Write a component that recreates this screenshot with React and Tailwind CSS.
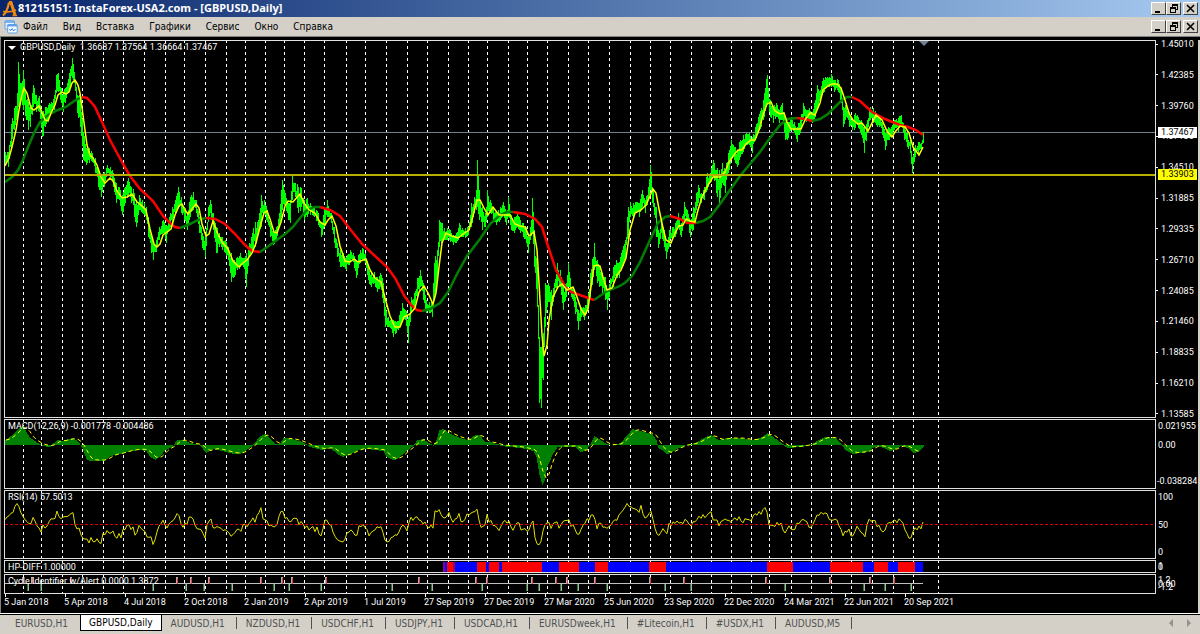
import { useState } from 'react';

const MENU = ['Файл', 'Вид', 'Вставка', 'Графики', 'Сервис', 'Окно', 'Справка'];

const TABS = [
  'EURUSD,H1',
  'GBPUSD,Daily',
  'AUDUSD,H1',
  'NZDUSD,H1',
  'USDCHF,H1',
  'USDJPY,H1',
  'USDCAD,H1',
  'EURUSDweek,H1',
  '#Litecoin,H1',
  '#USDX,H1',
  'AUDUSD,M5',
];

const DATES = [
  '5 Jan 2018', '5 Apr 2018', '4 Jul 2018', '2 Oct 2018', '2 Jan 2019', '2 Apr 2019', '1 Jul 2019', '27 Sep 2019',
  '27 Dec 2019', '27 Mar 2020', '25 Jun 2020', '23 Sep 2020', '22 Dec 2020', '24 Mar 2021', '22 Jun 2021', '20 Sep 2021',
];

const PRICES = [
  '1.45010', '1.42385', '1.39760', '1.37135', '1.34510', '1.31885', '1.29335',
  '1.26710', '1.24085', '1.21460', '1.18835', '1.16210', '1.13585',
];

// month separators
const GRID = [
  23, 41, 62, 82, 103, 123, 144, 165, 184, 205, 226, 245, 265, 284, 304, 324, 346, 365, 386, 407, 427, 448, 468, 487,
  508, 527, 547, 568, 588, 609, 630, 650, 670, 691, 711, 731, 751, 769, 791, 811, 831, 851, 872, 893, 913, 938,
];

// x, high, low
const RANGE = [
  [5, 152, 165], [8, 152, 167], [11, 124, 148], [14, 108, 130], [17, 93, 120], [18, 62, 107], [20, 83, 102],
  [23, 70, 110], [26, 100, 120], [28, 102, 130], [30, 107, 127], [33, 85, 107], [36, 95, 112], [39, 96, 112],
  [42, 113, 137], [45, 107, 127], [48, 105, 120], [51, 102, 112], [54, 95, 110], [56, 75, 93], [58, 73, 92],
  [60, 87, 100], [63, 92, 112], [66, 87, 98], [69, 73, 90], [72, 58, 78], [74, 72, 83], [77, 95, 113],
  [80, 97, 127], [83, 132, 160], [86, 148, 165], [89, 148, 163], [92, 153, 162], [95, 158, 173], [98, 170, 187],
  [101, 177, 197], [104, 172, 187], [107, 165, 173], [110, 167, 177], [113, 173, 187], [116, 183, 203],
  [119, 187, 200], [122, 195, 215], [125, 187, 203], [128, 178, 195], [131, 187, 203], [134, 193, 217],
  [136, 200, 227], [139, 195, 210], [142, 200, 213], [146, 207, 220], [148, 217, 237], [151, 233, 253],
  [153, 243, 260], [156, 240, 252], [159, 227, 240], [163, 220, 233], [166, 225, 243], [169, 217, 230],
  [172, 207, 223], [175, 200, 213], [178, 187, 207], [181, 197, 213], [184, 207, 220], [187, 213, 230],
  [190, 197, 217], [193, 192, 210], [196, 200, 213], [199, 217, 233], [202, 233, 248], [205, 237, 257],
  [208, 207, 222], [210, 200, 213], [213, 213, 230], [216, 227, 253], [219, 233, 247], [222, 237, 250],
  [225, 240, 253], [228, 247, 260], [231, 253, 282], [234, 260, 277], [237, 257, 270], [240, 253, 267],
  [243, 258, 267], [246, 253, 287], [249, 243, 257], [252, 233, 253], [255, 222, 247], [258, 220, 233],
  [261, 195, 227], [264, 200, 213], [267, 210, 222], [270, 223, 237], [273, 232, 245], [276, 227, 240],
  [279, 213, 227], [282, 180, 210], [285, 193, 205], [288, 203, 220], [290, 200, 223], [292, 175, 200],
  [295, 183, 197], [298, 187, 213], [301, 188, 207], [304, 200, 220], [307, 198, 217], [310, 203, 215],
  [314, 208, 217], [318, 213, 225], [321, 223, 237], [324, 210, 227], [327, 200, 217], [331, 213, 223],
  [334, 227, 243], [337, 243, 257], [340, 250, 267], [343, 253, 267], [346, 257, 270], [350, 250, 262],
  [353, 253, 262], [356, 260, 278], [360, 250, 263], [362, 248, 260], [365, 253, 263], [368, 265, 280],
  [371, 273, 287], [374, 272, 283], [377, 277, 292], [380, 273, 287], [383, 283, 303], [385, 307, 327],
  [388, 317, 327], [390, 320, 328], [393, 320, 337], [396, 322, 333], [399, 315, 328], [402, 303, 320],
  [405, 310, 320], [408, 317, 343], [411, 297, 313], [414, 293, 307], [417, 278, 300], [420, 270, 287],
  [423, 283, 300], [426, 300, 313], [429, 302, 313], [432, 303, 317], [434, 263, 300], [437, 250, 280],
  [439, 220, 247], [441, 223, 243], [444, 228, 240], [447, 228, 240], [450, 230, 242], [453, 235, 245],
  [456, 233, 243], [459, 223, 238], [462, 228, 237], [465, 228, 238], [468, 227, 235], [471, 203, 227],
  [474, 197, 213], [476, 190, 210], [477, 160, 207], [479, 190, 220], [482, 207, 230], [485, 213, 227],
  [487, 190, 217], [490, 200, 213], [493, 208, 220], [496, 212, 225], [500, 207, 220], [503, 202, 215],
  [506, 213, 225], [508, 197, 217], [511, 215, 230], [514, 217, 233], [517, 213, 227], [520, 220, 233],
  [523, 223, 237], [526, 227, 243], [528, 237, 253], [530, 227, 240], [532, 198, 233], [534, 230, 267],
  [537, 267, 307], [539, 337, 403], [541, 347, 408], [543, 333, 380], [545, 283, 327], [548, 283, 302],
  [551, 290, 320], [554, 283, 297], [557, 263, 287], [560, 270, 287], [563, 287, 310], [566, 283, 297],
  [568, 263, 287], [571, 287, 297], [574, 290, 307], [578, 310, 330], [581, 307, 317], [584, 308, 320],
  [587, 297, 310], [590, 273, 300], [594, 243, 270], [597, 260, 283], [602, 273, 293], [605, 277, 300],
  [607, 290, 310], [610, 278, 290], [613, 267, 287], [616, 260, 277], [619, 262, 278], [622, 250, 267],
  [625, 240, 260], [628, 207, 240], [630, 202, 217], [633, 203, 217], [636, 202, 213], [639, 203, 217],
  [642, 190, 207], [645, 200, 213], [648, 187, 200], [650, 165, 190], [653, 190, 207], [656, 207, 237],
  [658, 230, 248], [661, 223, 233], [664, 230, 247], [666, 243, 259], [669, 230, 247], [672, 227, 240],
  [675, 223, 237], [678, 213, 227], [681, 223, 237], [684, 202, 220], [687, 210, 223], [690, 220, 237],
  [693, 207, 230], [696, 193, 210], [698, 185, 203], [701, 193, 203], [704, 187, 200], [707, 173, 190],
  [710, 173, 183], [713, 160, 177], [716, 170, 193], [719, 170, 203], [722, 163, 183], [725, 170, 193],
  [728, 153, 173], [731, 140, 160], [734, 147, 160], [737, 150, 167], [740, 140, 157], [743, 135, 152],
  [746, 133, 145], [749, 133, 145], [752, 137, 153], [755, 127, 140], [758, 117, 133], [761, 108, 127],
  [764, 93, 117], [767, 75, 103], [770, 100, 117], [773, 107, 123], [776, 103, 117], [779, 110, 123],
  [782, 103, 120], [785, 120, 140], [788, 122, 138], [791, 117, 130], [794, 122, 133], [797, 127, 142],
  [800, 117, 133], [803, 103, 120], [806, 110, 122], [809, 108, 120], [812, 112, 123], [815, 100, 117],
  [817, 85, 110], [820, 90, 100], [823, 78, 93], [826, 78, 88], [829, 77, 87], [831, 74, 87], [834, 80, 92],
  [838, 80, 92], [841, 88, 103], [843, 107, 127], [846, 103, 117], [849, 112, 127], [852, 120, 130],
  [855, 113, 128], [858, 117, 128], [861, 120, 135], [864, 127, 153], [867, 120, 133], [870, 107, 120],
  [873, 108, 123], [876, 113, 125], [879, 115, 127], [882, 123, 135], [885, 133, 150], [888, 127, 140],
  [891, 127, 137], [894, 120, 130], [898, 118, 132], [901, 115, 127], [904, 127, 140], [907, 133, 147],
  [910, 140, 153], [912, 157, 173], [915, 145, 157], [918, 142, 153], [921, 143, 150], [923, 132, 143],
];

const FAST_MA =
  '5,166 9,158 12,147 16,130 19,110 22,95 24,88 27,93 31,108 34,110 39,106 42,112 45,120 48,121 51,113 55,105 58,95 62,92 66,94 69,92 72,83 75,80 78,85 80,93 83,115 87,145 90,155 93,158 97,165 101,177 105,183 110,178 113,181 117,191 122,198 127,197 132,194 137,202 142,206 146,210 150,229 154,244 157,247 160,244 163,235 167,232 171,229 175,215 179,206 182,204 185,210 188,214 192,209 196,204 199,208 202,224 206,236 209,234 213,221 217,232 222,242 228,249 233,261 239,267 243,263 247,260 252,253 256,243 260,227 264,213 267,211 270,219 274,232 277,233 281,222 285,206 288,201 293,202 300,194 304,203 309,210 315,213 320,222 325,225 328,220 332,216 336,226 340,246 345,261 350,262 354,259 358,262 366,259 370,270 375,278 381,282 385,298 390,316 395,327 400,327 404,317 410,314 415,308 419,292 424,286 428,293 433,304 436,293 439,267 442,243 446,233 452,236 458,238 463,234 469,230 473,216 477,200 480,200 484,208 488,215 493,207 499,215 510,215 515,224 520,226 525,227 529,236 534,232 537,250 539,283 542,335 544,356 547,345 549,320 553,297 558,287 562,284 567,290 573,287 577,297 581,309 585,315 588,309 591,287 594,266 597,265 600,266 603,277 607,290 612,288 617,275 621,270 626,258 630,230 635,213 641,210 646,205 650,196 653,189 656,193 659,209 663,228 666,240 671,243 675,233 679,226 683,225 686,219 690,221 695,222 698,210 702,197 708,185 713,177 720,177 725,172 729,162 734,155 738,150 742,150 746,144 751,140 755,140 759,130 763,115 767,104 771,102 775,111 780,114 784,113 787,122 791,129 801,129 805,120 810,113 815,115 820,103 823,90 828,86 832,84 837,84 841,88 845,100 849,113 853,120 858,124 862,123 868,131 872,123 876,115 882,120 887,131 892,137 895,132 900,126 905,127 909,133 913,147 919,155 923,147';

const SLOW_UP = [
  '5,182 12,177 18,170 23,160 28,147 34,133 40,122 48,115 58,110 66,107 74,101 82,97',
  '180,228 190,224 198,220 206,218',
  '260,252 270,245 285,234 293,227 300,218 306,211 314,207 320,207',
  '422,311 430,309 440,303 448,292 457,274 467,256 480,239 490,224 500,215 507,212 513,212',
  '594,300 607,291 620,286 626,282 632,276 640,262 650,240 658,223 665,217 670,216',
  '696,223 703,221 710,217 720,204 740,176 760,152 770,138 780,125 788,119 797,118',
  '812,121 820,119 828,114 835,107 842,100 847,97 852,97',
];

const SLOW_DOWN = [
  '82,97 87,98 91,102 95,107 102,122 110,140 123,164 130,176 140,189 153,201 163,216 170,223 175,227 180,228',
  '206,218 215,219 225,224 235,234 245,245 252,251 260,252',
  '320,207 330,210 340,216 350,229 362,244 375,256 387,267 395,278 405,297 412,306 417,310 422,311',
  '513,212 525,214 535,219 542,227 548,246 556,270 566,288 571,292 577,294 594,300',
  '670,216 680,219 687,223 696,223',
  '797,118 805,119 812,121',
  '852,97 860,101 872,112 885,119 900,125 908,127 916,130 923,135',
];

const MACD = [
  [5, 440], [12, 435], [20, 427], [23, 426], [27, 434], [30, 438], [36, 442], [42, 445], [50, 446], [57, 440],
  [62, 441], [68, 439], [73, 438], [78, 442], [82, 447], [86, 458], [90, 460], [104, 460], [110, 455], [120, 453],
  [130, 450], [140, 449], [146, 450], [150, 456], [155, 459], [160, 455], [165, 449], [172, 446], [177, 440],
  [183, 440], [190, 443], [200, 445], [206, 452], [213, 448], [222, 450], [233, 453], [240, 453], [246, 449],
  [252, 445], [260, 436], [265, 434], [270, 439], [275, 444], [279, 444], [283, 438], [292, 439], [302, 442],
  [310, 446], [322, 449], [330, 447], [337, 453], [342, 456], [350, 453], [358, 449], [366, 448], [383, 450],
  [386, 456], [393, 459], [397, 458], [406, 450], [413, 445], [417, 440], [423, 439], [428, 443], [433, 445],
  [436, 440], [439, 430], [443, 429], [450, 434], [460, 438], [468, 440], [475, 435], [479, 435], [485, 442],
  [490, 442], [500, 445], [520, 447], [533, 450], [536, 456], [539, 474], [542, 484], [544, 480], [547, 465],
  [553, 452], [557, 446], [575, 446], [580, 451], [585, 450], [590, 444], [594, 436], [600, 440], [606, 444],
  [613, 445], [620, 443], [627, 435], [632, 429], [640, 431], [652, 434], [656, 440], [658, 447], [663, 450],
  [666, 453], [671, 452], [676, 448], [684, 445], [695, 443], [705, 437], [711, 435], [718, 440], [727, 438],
  [740, 438], [752, 440], [762, 437], [767, 433], [773, 437], [778, 441], [784, 445], [787, 447], [800, 446],
  [812, 444], [818, 440], [825, 437], [835, 438], [842, 445], [845, 449], [852, 453], [860, 452], [868, 451],
  [872, 447], [876, 445], [884, 447], [890, 450], [896, 448], [900, 445], [908, 447], [913, 452], [918, 451],
  [923, 446],
];

const RSI = [
  [5, 520], [8, 519], [10, 512], [14, 508], [17, 504], [20, 510], [22, 515], [24, 519], [27, 525], [30, 524],
  [33, 518], [37, 523], [41, 529], [44, 526], [48, 526], [52, 520], [57, 513], [60, 522], [64, 520], [68, 518],
  [72, 512], [75, 524], [80, 533], [83, 540], [90, 540], [95, 540], [100, 543], [104, 533], [108, 529],
  [112, 533], [116, 538], [119, 530], [121, 536], [125, 528], [130, 526], [135, 533], [140, 526], [144, 528],
  [148, 536], [153, 543], [156, 534], [160, 525], [163, 520], [166, 528], [170, 521], [175, 517], [178, 513],
  [181, 524], [185, 526], [190, 518], [194, 523], [198, 528], [205, 537], [207, 522], [211, 521], [215, 530],
  [220, 528], [226, 530], [232, 537], [236, 530], [241, 530], [246, 524], [252, 522], [256, 518], [261, 511],
  [265, 520], [269, 525], [274, 529], [278, 520], [282, 512], [286, 517], [290, 524], [293, 517], [297, 522],
  [300, 522], [306, 527], [312, 527], [318, 530], [322, 534], [326, 517], [330, 524], [336, 535], [341, 540],
  [345, 539], [350, 529], [356, 537], [360, 523], [365, 530], [370, 535], [375, 527], [380, 528], [385, 538],
  [392, 540], [397, 535], [402, 523], [407, 529], [410, 520], [417, 515], [420, 521], [427, 524], [433, 530],
  [435, 514], [439, 508], [443, 515], [448, 514], [453, 521], [459, 516], [464, 522], [471, 511], [477, 508],
  [479, 520], [482, 528], [485, 523], [487, 516], [492, 524], [498, 528], [503, 524], [508, 520], [512, 528],
  [518, 525], [524, 530], [528, 530], [532, 518], [534, 530], [537, 543], [539, 548], [542, 540], [545, 523],
  [551, 525], [556, 521], [560, 527], [568, 520], [573, 526], [578, 534], [583, 528], [588, 518], [594, 512],
  [597, 526], [602, 523], [607, 530], [612, 520], [617, 520], [622, 515], [628, 504], [633, 505], [636, 514],
  [641, 508], [644, 518], [650, 512], [653, 520], [657, 534], [662, 530], [666, 534], [670, 523], [676, 521],
  [680, 524], [685, 519], [690, 527], [695, 520], [703, 516], [708, 513], [712, 515], [718, 525], [724, 517],
  [730, 522], [738, 520], [744, 520], [750, 520], [758, 514], [766, 508], [769, 522], [775, 526], [780, 524],
  [785, 533], [790, 525], [795, 528], [800, 522], [803, 519], [808, 524], [813, 525], [816, 514], [822, 515],
  [828, 517], [833, 520], [838, 524], [843, 537], [847, 529], [852, 536], [858, 527], [864, 536], [870, 520],
  [876, 524], [884, 534], [888, 524], [895, 521], [902, 523], [906, 533], [911, 537], [914, 528], [920, 528],
  [923, 521],
];

// start x and colour, each block runs to the next one
const HP_DIFF = [
  [443, '#8000a0'], [445, '#0000ff'], [447, '#ff0000'], [453, '#a00060'], [455, '#0000ff'], [477, '#ff0000'],
  [486, '#0000ff'], [489, '#ff0000'], [499, '#0000ff'], [502, '#ff0000'], [542, '#0000ff'], [559, '#ff0000'],
  [579, '#0000ff'], [595, '#ff0000'], [608, '#0000ff'], [649, '#ff0000'], [666, '#0000ff'], [767, '#ff0000'],
  [793, '#0000ff'], [830, '#ff0000'], [863, '#0000ff'], [874, '#ff0000'], [888, '#0000ff'], [898, '#ff0000'],
  [915, '#0000ff'], [923, '#0000ff'],
];

const CYCLE_TOPS = [
  23, 32, 71, 177, 191, 209, 261, 282, 292, 326, 419, 476, 487, 532, 556, 567, 595, 650, 684, 766, 830, 870, 894,
];
const CYCLE_BOTTOMS = [
  28, 41, 153, 186, 204, 232, 274, 289, 321, 392, 432, 482, 527, 539, 561, 578, 607, 665, 691, 785, 864, 885, 911,
];

// small repeatable noise in 0..1
const noise = (n) => {
  const v = Math.sin(n * 12.9898) * 43758.5453;
  return v - Math.floor(v);
};

// value of column `col` at x, linear between the neighbouring points
const valueAt = (points, x, col = 1) => {
  const next = points.findIndex((p) => p[0] >= x);
  if (next <= 0) return points[0][col];
  const a = points[next - 1];
  const b = points[next];
  return a[col] + ((b[col] - a[col]) * (x - a[0])) / (b[0] - a[0]);
};

const xs = Array.from({ length: 919 }, (_, i) => i + 5);

const priceBars = xs.map((x) => {
  const key = RANGE.find((p) => p[0] === x);
  const high = valueAt(RANGE, x, 1);
  const low = valueAt(RANGE, x, 2);
  if (key) return `M${x + 0.5} ${high}V${low}`;
  const size = low - high;
  return `M${x + 0.5} ${high + (noise(x) - 0.2) * size * 0.45}V${low - (noise(x + 500) - 0.2) * size * 0.45}`;
});

const macdBars = xs.map((x) => `M${x + 0.5} 445V${Math.round(valueAt(MACD, x)) + (valueAt(MACD, x) >= 445 ? 1 : 0)}`);

const macdSignal = xs
  .filter((x) => x % 3 === 0)
  .map((x) => {
    const values = [1, 3, 5, 7].map((d) => valueAt(MACD, Math.max(5, x - d)));
    return `${x},${values.reduce((sum, v) => sum + v, 0) / values.length}`;
  });

const rsiLine = xs.filter((x) => x % 2 === 1).map((x) => `${x},${valueAt(RSI, x) + (noise(x) - 0.5) * 7}`);

function AppLogo() {
  return (
    <svg className="h-4 w-4" viewBox="0 0 16 16" fill="none" stroke="#f08a10">
      <path d="M1 14.5C4 12 6 7 7 1.5" strokeWidth="2.2" />
      <path d="M7 1.5h2L13 14" strokeWidth="3" />
      <path d="M1 10.5c4 1 8 .5 13-1.5" strokeWidth="1.6" />
      <path d="M10.5 14.5H15" strokeWidth="1.5" />
    </svg>
  );
}

function ChartIcon() {
  return (
    <svg className="h-[14px] w-[14px]" viewBox="0 0 14 14" fill="none">
      <rect x="1" y=".7" width="9.5" height="8.5" rx="1" fill="#eaf4ff" stroke="#5c9ee8" />
      <path d="M1 2h9.5" stroke="#5c9ee8" strokeWidth="1.5" />
      <path d="M2.5 6 4 4.5 5.500 6" stroke="#5c9ee8" />
      <rect x="3.7" y="4.5" width="9.5" height="8.5" rx="1" fill="#f4faff" stroke="#5c9ee8" />
      <path d="M4 5.7h9" stroke="#5c9ee8" strokeWidth="1.5" />
      <path d="m5.5 9 1 1.8 1.700-2.300 1.500 2.500L11.500 9" stroke="#3d83d6" />
    </svg>
  );
}

function WindowButton({ label, children }) {
  return (
    <button
      aria-label={label}
      className="flex h-[13px] w-[15px] items-center justify-center border border-t-white border-l-white border-r-[#404040] border-b-[#404040] bg-[#d4d0c8]"
    >
      <svg className="h-[9px] w-[9px]" viewBox="0 0 9 9" fill="none" stroke="#000" shapeRendering="crispEdges">
        {children}
      </svg>
    </button>
  );
}

function WindowButtons({ name }) {
  return (
    <div className="ml-auto flex pr-[2px]">
      <WindowButton label={`Minimize ${name}`}>
        <path d="M1 8h5" strokeWidth="2" />
      </WindowButton>
      <WindowButton label={`Restore ${name}`}>
        <path d="M3 1h6M1 4h6" strokeWidth="2" />
        <path d="M3.5 1v2M8.5 1v5M6 5.5h3M1.5 4v4.5M6.5 4v4.5M1 8.5h6" />
      </WindowButton>
      <div className="w-[2px]" />
      <WindowButton label={`Close ${name}`}>
        <path d="m1 1 7 7M8 1 1 8" strokeWidth="1.6" shapeRendering="auto" />
      </WindowButton>
    </div>
  );
}

// one chart window: plot on the left, its scale on the right
function Pane({ className, top, label, axis, children }) {
  return (
    <section className={`flex ${className}`}>
      <div className="relative min-w-0 flex-1 overflow-hidden border border-[#e0e0e0]">
        <svg className="absolute inset-0 h-full w-full" fill="none">
          <g transform={`translate(-5 ${-top - 1})`}>
            <path
              d={GRID.map((x) => `M${x + 0.5} ${top}V634`).join('')}
              stroke="#ffffff"
              strokeDasharray="3 3"
              shapeRendering="crispEdges"
            />
            {children}
          </g>
        </svg>
        <p className="relative mt-px ml-[3px] leading-[11px] whitespace-pre">{label}</p>
      </div>
      <div className="relative w-[42px] shrink-0">{axis}</div>
    </section>
  );
}

export default function App() {
  const [activeTab, setActiveTab] = useState('GBPUSD,Daily');

  return (
    <div className="flex min-h-screen flex-col bg-[#d4d0c8] font-['DejaVu_Sans_Condensed','DejaVu_Sans',sans-serif] text-[10px] text-black">
      <header className="flex h-[17px] items-center bg-linear-to-r from-[#0a246a] to-[#a6caf0] pl-[2px]">
        <AppLogo />
        <h1 className="font-['Noto_Sans',sans-serif] text-[11px] font-bold whitespace-nowrap text-white">
          81215151: InstaForex-USA2.com - [GBPUSD,Daily]
        </h1>
        <WindowButtons name="application" />
      </header>

      <nav className="flex h-[19px] items-center pl-1">
        <ChartIcon />
        <div className="ml-[5px] flex gap-[15px]">
          {MENU.map((item) => (
            <button key={item}>{item}</button>
          ))}
        </div>
        <WindowButtons name="chart" />
      </nav>

      <main className="flex flex-1 flex-col border-t border-l border-[#808080] bg-black pt-[3px] pl-[3px] font-['Roboto',sans-serif] text-[9px] text-white">
        <div className="flex flex-1 flex-col gap-px border-r-2 border-[#d4d0c8]">
          <Pane
            className="min-h-[300px] flex-1"
            top={40}
            label={
              <>
                <span className="mr-1 inline-block border-x-4 border-t-4 border-x-transparent border-t-white align-middle" />
                GBPUSD,Daily{'  '}1.36687 1.37564 1.36664 1.37467
              </>
            }
            axis={
              <>
                <div className="absolute inset-x-0 -inset-y-px flex flex-col justify-between leading-[10px]">
                  {PRICES.map((price) => (
                    <div key={price} className="flex items-center gap-[3px]">
                      <span className="h-px w-[2px] bg-white" />
                      {price}
                    </div>
                  ))}
                </div>
                <span className="absolute top-[87px] left-[2px] bg-white px-[3px] leading-[11px] text-black">1.37467</span>
                <span className="absolute top-[129px] left-[2px] bg-[#ffff00] px-[3px] leading-[11px] text-black">1.33903</span>
              </>
            }
          >
            <path d="M5 132.5H2000" stroke="#708090" shapeRendering="crispEdges" />
            <path d="M919 41h10l-5 5z" fill="#708090" />
            <path d={priceBars.join('')} stroke="#00ff00" shapeRendering="crispEdges" />
            {SLOW_UP.map((points) => (
              <polyline key={points} points={points} stroke="#008000" strokeWidth="2.5" />
            ))}
            {SLOW_DOWN.map((points) => (
              <polyline key={points} points={points} stroke="#ff0000" strokeWidth="2.5" />
            ))}
            <polyline points={FAST_MA} stroke="#ffff00" strokeWidth="1.5" />
            <path d="M5 175H2000" stroke="#b8b000" strokeWidth="2" shapeRendering="crispEdges" />
          </Pane>

          <Pane
            className="h-[70px]"
            top={419}
            label="MACD(12,26,9) -0.001778 -0.004486"
            axis={
              <div className="pl-[2px] leading-[10px] whitespace-nowrap">
                <div className="pt-[2px]">0.021955</div>
                <div className="pt-[9px]">0.00</div>
                <div className="-ml-px pt-[26px]">-0.038284</div>
              </div>
            }
          >
            <path d={macdBars.join('')} stroke="#008000" shapeRendering="crispEdges" />
            <polyline points={macdSignal.join(' ')} stroke="#ffff00" strokeDasharray="4 3" />
          </Pane>

          <Pane
            className="h-[69px]"
            top={490}
            label="RSI(14) 57.5013"
            axis={
              <div className="flex h-full flex-col justify-between py-[2px] pl-[2px] leading-[10px]">
                <div>100</div>
                <div>50</div>
                <div>0</div>
              </div>
            }
          >
            <polyline points={rsiLine.join(' ')} stroke="#e0e000" />
            <path d="M5 524.5H2000" stroke="#e00000" strokeDasharray="3 2" shapeRendering="crispEdges" />
          </Pane>

          <Pane
            className="h-[13px]"
            top={560}
            label="HP-DIFF 1.00000"
            axis={
              <>
                <span className="absolute top-[2px] left-[2px] leading-[10px]">0</span>
                <span className="absolute top-px left-[2px] leading-[10px]">1</span>
              </>
            }
          >
            {HP_DIFF.slice(0, -1).map(([x, color], i) => (
              <rect key={x} x={x} y="562" width={HP_DIFF[i + 1][0] - x} height="10" fill={color} />
            ))}
          </Pane>

          <Pane
            className="h-5"
            top={574}
            label="Cycle Identifier w/Alert 0.0000 1.3872"
            axis={
              <>
                <span className="absolute top-px left-[2px] leading-[10px]">1.2</span>
                <span className="absolute top-[5px] left-[2px] leading-[10px]">0.00</span>
                <span className="absolute top-[8px] left-[2px] leading-[10px]">-1.2</span>
              </>
            }
          >
            <g shapeRendering="crispEdges">
              <path d="M5 583.5H923" stroke="#c0c0c0" />
              <path d={CYCLE_TOPS.map((x) => `M${x - 0.5} 583.5V577.5H${x + 1}`).join('')} stroke="#b0b0b0" />
              <path d={CYCLE_TOPS.map((x) => `M${x + 0.5} 578V584`).join('')} stroke="#e04040" />
              <path d={CYCLE_BOTTOMS.map((x) => `M${x - 0.5} 584V590.5H${x + 1}`).join('')} stroke="#208030" />
              <path d={CYCLE_BOTTOMS.map((x) => `M${x + 0.5} 584V591`).join('')} stroke="#b0b0b0" />
            </g>
          </Pane>

          <div className="-mt-px flex h-[19px] leading-[11px] whitespace-nowrap">
            {DATES.map((date) => (
              <div key={date} className="w-[60px] shrink-0">
                <div className="ml-px h-[3px] w-px bg-white" />
                {date}
              </div>
            ))}
          </div>
        </div>
      </main>

      <footer className="flex h-[21px] items-start border-t border-white">
        <div className="flex flex-1 items-stretch border-t border-black pl-[6px] text-[#505050]">
          {TABS.map((tab, i) => {
            const active = tab === activeTab;
            const beforeActive = TABS[i + 1] === activeTab;
            return (
              <button
                key={tab}
                onClick={() => setActiveTab(tab)}
                className={
                  active
                    ? 'h-4 border-x border-b border-black bg-white px-2 leading-[15px] text-black'
                    : 'flex h-4 items-center pl-[9px] leading-[15px]'
                }
              >
                {tab}
                {!active && <span className={beforeActive ? 'ml-3' : 'ml-[11px] h-3 w-px bg-[#505050]'} />}
              </button>
            );
          })}
          <div className="ml-auto flex items-center gap-[14px] pr-[9px]">
            <button aria-label="Scroll tabs left" className="border-y-4 border-r-4 border-y-transparent border-r-[#909090]" />
            <button aria-label="Scroll tabs right" className="border-y-4 border-l-4 border-y-transparent border-l-[#909090]" />
          </div>
        </div>
      </footer>
    </div>
  );
}
